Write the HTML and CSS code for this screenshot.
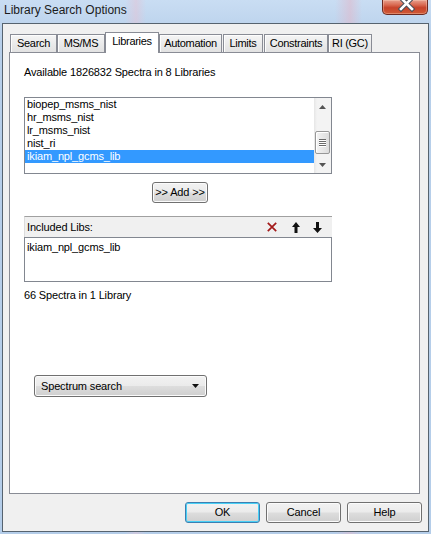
FILE: index.html
```html
<!DOCTYPE html>
<html>
<head>
<meta charset="utf-8">
<title>Library Search Options</title>
<link rel="stylesheet" href="styles.css">
</head>
<body>
<div class="window">
  <div class="titlebar">
    <span class="title">Library Search Options</span>
    <div class="close">
      <svg width="44" height="14" viewBox="0 0 44 14">
        <path d="M18 -2 L29 9 M29 -2 L18 9" stroke="#4a4f58" stroke-width="4.6" stroke-linecap="square" fill="none"/>
        <path d="M18 -2 L29 9 M29 -2 L18 9" stroke="#ffffff" stroke-width="2.6" stroke-linecap="square" fill="none"/>
      </svg>
    </div>
  </div>
  <div class="client">
    <div class="tabs">
      <div class="tab tab-search">Search</div>
      <div class="tab tab-msms">MS/MS</div>
      <div class="tab tab-libs active">Libraries</div>
      <div class="tab tab-auto">Automation</div>
      <div class="tab tab-limits">Limits</div>
      <div class="tab tab-cons">Constraints</div>
      <div class="tab tab-ri">RI (GC)</div>
    </div>
    <div class="panel">
      <div class="label">Available 1826832 Spectra in 8 Libraries</div>
      <div class="listbox">
        <ul class="items">
          <li>biopep_msms_nist</li>
          <li>hr_msms_nist</li>
          <li>lr_msms_nist</li>
          <li>nist_ri</li>
          <li class="selected">ikiam_npl_gcms_lib</li>
        </ul>
        <div class="scrollbar">
          <div class="sb-btn">
            <svg width="7" height="4" viewBox="0 0 7 4"><path d="M3.5 0 L7 4 L0 4 Z" fill="#555"/></svg>
          </div>
          <div class="sb-track">
            <div class="thumb">
              <span class="grip"></span><span class="grip"></span><span class="grip"></span><span class="grip"></span>
            </div>
          </div>
          <div class="sb-btn">
            <svg width="7" height="4" viewBox="0 0 7 4"><path d="M0 0 L7 0 L3.5 4 Z" fill="#555"/></svg>
          </div>
        </div>
      </div>
      <div class="add-row">
        <button class="btn add">&gt;&gt; Add &gt;&gt;</button>
      </div>
      <div class="included">
        <div class="inc-header">
          <span>Included Libs:</span>
          <div class="inc-tools">
            <svg class="ico-x" width="10" height="10" viewBox="0 0 10 10">
              <path d="M0.8 0.8 L9.2 9.2 M9.2 0.8 L0.8 9.2" stroke="#a31a1a" stroke-width="1.7" fill="none"/>
            </svg>
            <svg class="ico-up" width="8" height="11" viewBox="0 0 8 11">
              <path d="M4 0 L8 5 L5.5 5 L5.5 11 L2.5 11 L2.5 5 L0 5 Z" fill="#111"/>
            </svg>
            <svg class="ico-down" width="9" height="11" viewBox="0 0 9 11">
              <path d="M3 0 L6 0 L6 6 L9 6 L4.5 11 L0 6 L3 6 Z" fill="#111"/>
            </svg>
          </div>
        </div>
        <div class="inc-list">
          <div class="row">ikiam_npl_gcms_lib</div>
        </div>
      </div>
      <div class="label count">66 Spectra in 1 Library</div>
      <div class="combo">
        <span>Spectrum search</span>
        <svg width="7" height="4" viewBox="0 0 7 4"><path d="M0 0 L7 0 L3.5 4 Z" fill="#111"/></svg>
      </div>
    </div>
    <div class="buttons">
      <button class="btn dlg default">OK</button>
      <button class="btn dlg">Cancel</button>
      <button class="btn dlg">Help</button>
    </div>
  </div>
</div>
</body>
</html>
```

FILE: styles.css
```css
html, body {
  margin: 0;
  padding: 0;
}

body {
  width: 431px;
  height: 534px;
  overflow: hidden;
  font-family: "Liberation Sans", Arial, sans-serif;
  font-size: 11px;
  letter-spacing: -0.15px;
  color: #000;
  background:
    linear-gradient(90deg, rgba(230,200,215,0) 125px, rgba(226,196,214,0.55) 136px, rgba(230,200,215,0) 146px,
                    rgba(230,200,215,0) 335px, rgba(222,186,205,0.6) 350px, rgba(230,200,215,0) 362px),
    linear-gradient(#c9ddf3, #b7cfea 40px, #b4cde9);
}

.window {
  height: 534px;
  display: flex;
  flex-direction: column;
}

.titlebar {
  height: 23px;
  display: flex;
  justify-content: space-between;
  align-items: flex-start;
  padding-left: 4px;
}

.title {
  font-size: 12px;
  line-height: 16px;
  padding-top: 2px;
  letter-spacing: 0;
  color: #1b1b1b;
}

.close {
  width: 46px;
  height: 15px;
  box-sizing: border-box;
  margin-right: 3px;
  border: 1px solid #6b2a22;
  border-top: none;
  border-radius: 0 0 5px 5px;
  background: linear-gradient(#e7a08e 0%, #d96a52 35%, #c7432b 55%, #cf5a36 100%);
  box-shadow: inset 0 0 0 1px rgba(255,220,200,0.35);
  overflow: hidden;
}

.close svg {
  display: block;
}

.client {
  height: 509px;
  box-sizing: border-box;
  margin: 0 2px;
  border: 1px solid #56636f;
  background: #f0f0f0;
  padding: 8px 0 0 6px;
}

/* Tabs */
.tabs {
  height: 20px;
  display: flex;
  align-items: flex-end;
  padding-left: 1px;
}

.tab {
  box-sizing: border-box;
  height: 18px;
  border: 1px solid #898c95;
  border-bottom: none;
  background: linear-gradient(#f5f5f5, #e9e9e9 60%, #e2e2e2);
  box-shadow: inset 1px 1px 0 #fdfdfd;
  text-align: center;
  line-height: 17px;
  white-space: nowrap;
  letter-spacing: -0.3px;
}

.tab.active {
  height: 21px;
  margin-bottom: -1px;
  background: #fff;
  box-shadow: none;
  position: relative;
  line-height: 17px;
}

.tab-search { width: 47px; }
.tab-msms { width: 48px; }
.tab-libs { width: 54px; }
.tab-auto { width: 63px; margin-right: 1px; }
.tab-limits { width: 40px; margin-right: 1px; }
.tab-cons { width: 64px; }
.tab-ri { width: 44px; }

/* Panel */
.panel {
  width: 411px;
  height: 442px;
  box-sizing: border-box;
  border: 1px solid #898c95;
  background: #fff;
  padding: 13px 0 0 14px;
}

.label {
  line-height: 13px;
  white-space: nowrap;
}

.listbox {
  margin-top: 18px;
  width: 308px;
  height: 77px;
  box-sizing: border-box;
  border: 1px solid #828790;
  display: flex;
}

.items {
  flex: 1;
  list-style: none;
  margin: 0;
  padding: 0;
}

.items li {
  height: 13px;
  line-height: 13px;
  padding-left: 2px;
  white-space: nowrap;
}

.items li.selected {
  background: #3399ff;
  color: #fff;
}

.scrollbar {
  width: 17px;
  display: flex;
  flex-direction: column;
  background: linear-gradient(90deg, #e6e6e6, #f3f3f3 3px, #f3f3f3);
}

.sb-btn {
  height: 17px;
  display: flex;
  align-items: center;
  justify-content: center;
}

.sb-btn svg {
  display: block;
}

.sb-track {
  flex: 1;
}

.thumb {
  margin: 16px 1px 0 1px;
  height: 23px;
  box-sizing: border-box;
  border: 1px solid #979797;
  border-radius: 2px;
  background: linear-gradient(90deg, #f4f4f4, #e8e8e8 50%, #dcdcdc);
  box-shadow: inset 1px 1px 0 #fff;
  display: flex;
  flex-direction: column;
  align-items: center;
  justify-content: center;
  gap: 1px;
}

.grip {
  display: block;
  width: 7px;
  height: 1px;
  background: #6a6a6a;
  box-shadow: 0 1px 0 #fff;
}

/* Buttons */
.btn {
  font-family: "Liberation Sans", Arial, sans-serif;
  font-size: 11px;
  letter-spacing: -0.15px;
  color: #000;
  box-sizing: border-box;
  height: 21px;
  margin: 0;
  padding: 0;
  border: 1px solid #707070;
  border-radius: 3px;
  background: linear-gradient(#f2f2f2 0%, #ebebeb 48%, #dddddd 52%, #cfcfcf 100%);
  box-shadow: inset 0 0 0 1px #fbfbfb;
  line-height: 19px;
  text-align: center;
}

.add-row {
  width: 308px;
  margin-top: 8px;
  padding-left: 4px;
  box-sizing: border-box;
  display: flex;
  justify-content: center;
}

.btn.add {
  width: 56px;
}

/* Included libs */
.included {
  margin-top: 13px;
  width: 308px;
}

.inc-header {
  height: 21px;
  box-sizing: border-box;
  border-top: 1px solid #a0a0a0;
  border-left: 1px solid #dcdcdc;
  background: #f0f0f0;
  display: flex;
  align-items: center;
  padding-left: 2px;
  line-height: 13px;
}

.inc-tools {
  margin-left: auto;
  display: flex;
  align-items: center;
  padding-right: 10px;
}

.inc-tools svg {
  display: block;
}

.ico-up {
  margin-left: 15px;
}

.ico-down {
  margin-left: 13px;
}

.inc-list {
  height: 45px;
  box-sizing: border-box;
  border: 1px solid #828790;
  padding-top: 3px;
}

.inc-list .row {
  height: 13px;
  line-height: 13px;
  padding-left: 2px;
}

.count {
  margin-top: 7px;
}

.combo {
  margin-top: 73px;
  margin-left: 10px;
  width: 173px;
  height: 22px;
  box-sizing: border-box;
  border: 1px solid #707070;
  border-radius: 3px;
  background: linear-gradient(#f2f2f2 0%, #ebebeb 48%, #dddddd 52%, #cfcfcf 100%);
  box-shadow: inset 0 0 0 1px #fbfbfb;
  display: flex;
  align-items: center;
  justify-content: space-between;
  padding: 0 7px 0 6px;
  line-height: 13px;
}

.combo svg {
  display: block;
}

/* Dialog buttons */
.buttons {
  margin-top: 8px;
  display: flex;
  justify-content: flex-end;
  gap: 6px;
  padding-right: 6px;
}

.btn.dlg {
  width: 75px;
}

.btn.default {
  border-color: #3c7fb1;
  box-shadow: inset 0 0 0 1px #48d0f6;
}
```
